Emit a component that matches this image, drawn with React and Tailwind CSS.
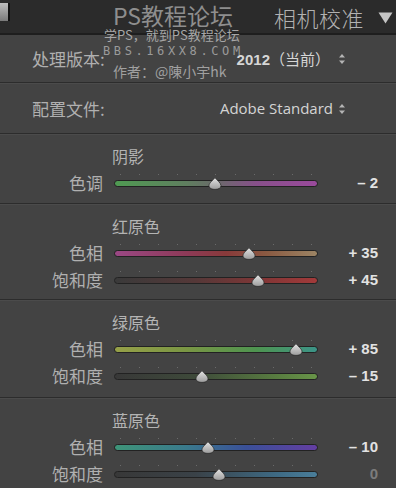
import React from "react"

const sections = [
  {
    title: "阴影",
    height: "h-[68px]",
    rows: [
      { label: "色调", value: "– 2", pos: 215, track: "bg-[linear-gradient(90deg,#4f9a52,#5f7f5f_35%,#6a6a6a_50%,#87508a_70%,#9a4a9c)]" },
    ],
  },
  {
    title: "红原色",
    height: "h-[94px]",
    rows: [
      { label: "色相", value: "+ 35", pos: 249, track: "bg-[linear-gradient(90deg,#9a4884,#8e3a58_35%,#883a3a_55%,#8a5a42_75%,#9c8464)]" },
      { label: "饱和度", value: "+ 45", pos: 258, track: "bg-[linear-gradient(90deg,#3a3a3a,#553838_40%,#843636_75%,#a23a3a)]" },
    ],
  },
  {
    title: "绿原色",
    height: "h-[96px]",
    rows: [
      { label: "色相", value: "+ 85", pos: 296, track: "bg-[linear-gradient(90deg,#96a048,#7a9644_35%,#4e9450_70%,#3c9488)]" },
      { label: "饱和度", value: "– 15", pos: 202, track: "bg-[linear-gradient(90deg,#383838,#3e4a3a_40%,#587c40_80%,#689448)]" },
    ],
  },
  {
    title: "蓝原色",
    height: "h-[89px]",
    rows: [
      { label: "色相", value: "– 10", pos: 208, track: "bg-[linear-gradient(90deg,#3e9478,#3a7a8c_35%,#3a5098_65%,#643ea2)]" },
      { label: "饱和度", value: "0", pos: 219, dim: true, track: "bg-[linear-gradient(90deg,#383838,#3a4248_40%,#3e6a84_80%,#4a7e9a)]" },
    ],
  },
]

function UpDown() {
  return (
    <svg width="8" height="12" viewBox="0 0 8 12" className="shrink-0">
      <path d="M4 1 L7 4.5 L1 4.5 Z" fill="#b4b4b4" />
      <path d="M4 11 L7 7.5 L1 7.5 Z" fill="#b4b4b4" />
    </svg>
  )
}

function Thumb() {
  return (
    <svg width="14" height="13" viewBox="0 0 14 13">
      <defs>
        <linearGradient id="tg" x1="0" y1="0" x2="0" y2="1">
          <stop offset="0" stopColor="#e4e4e4" />
          <stop offset="1" stopColor="#9c9c9c" />
        </linearGradient>
      </defs>
      <path
        d="M7 0.6 C8.2 2.6 13 5.8 13 8.6 C13 11.2 10.4 12.4 7 12.4 C3.6 12.4 1 11.2 1 8.6 C1 5.8 5.8 2.6 7 0.6 Z"
        fill="url(#tg)"
        stroke="#2a2a2a"
        strokeWidth="0.8"
      />
    </svg>
  )
}

function Slider({ row }) {
  const left = row.pos - 114
  return (
    <div className="relative w-[204px] h-[14px] ml-[11px]">
      {/* tick dots */}
      <div className="absolute left-[6px] right-[6px] top-[-2px] flex justify-between">
        {Array.from({ length: 11 }).map((_, i) => (
          <span key={i} className="w-px h-px bg-[#6a6a6a]" />
        ))}
      </div>
      <div className={`absolute left-0 right-0 top-[4px] h-[7px] rounded-full border border-[#222] ${row.track}`} />
      <div className="absolute top-[1px]" style={{ left: left - 7 }}>
        <Thumb />
      </div>
    </div>
  )
}

function Separator() {
  return <div className="h-[2px] border-t border-[#2c2c2c] bg-[#4b4b4b]" />
}

export default function App() {
  return (
    <div className="relative w-[396px] h-[488px] overflow-hidden bg-[#434343] font-['Liberation_Sans','Noto_Sans_CJK_SC',sans-serif]">
      {/* Header */}
      <div className="h-[33px] bg-[#2b2b2b] flex items-center pr-[3px]">
        <div className="self-start mt-[3px] w-[10px] h-[18px] border-r-2 border-[#111] bg-[linear-gradient(180deg,#bdbdbd,#7a7a7a)]" />
        <span className="ml-auto text-[22px] leading-none text-[#b2b2b2] font-['Noto_Sans_CJK_SC',sans-serif] font-light tracking-[0.5px]">相机校准</span>
        <svg width="15" height="12" viewBox="0 0 15 12" className="ml-[14px] mt-[2px]">
          <path d="M0.5 0.5 H14.5 L7.5 11.5 Z" fill="#c4c4c4" />
        </svg>
      </div>
      <div className="h-[2px] bg-[#1e1e1e]" />

      {/* 处理版本 */}
      <div className="h-[47px] flex items-center pl-[32px] pr-[50px]">
        <span className="text-[17px] leading-none text-[#b0b0b0] font-['Noto_Sans_CJK_SC',sans-serif]">处理版本:</span>
        <div className="ml-auto flex items-center gap-[8px]">
          <span className="text-[15px] leading-none text-[#d6d6d6]">
            <span className="font-bold font-['Liberation_Sans',sans-serif]">2012</span>
            <span className="font-['Noto_Sans_CJK_SC',sans-serif]">（当前）</span>
          </span>
          <UpDown />
        </div>
      </div>
      <Separator />

      {/* 配置文件 */}
      <div className="h-[49px] flex items-center pl-[32px] pr-[50px]">
        <span className="text-[17px] leading-none text-[#b0b0b0] font-['Noto_Sans_CJK_SC',sans-serif]">配置文件:</span>
        <div className="ml-auto flex items-center gap-[5px]">
          <span className="text-[15px] leading-none text-[#d4d4d4] font-['Open_Sans',sans-serif]">Adobe Standard</span>
          <UpDown />
        </div>
      </div>

      {sections.map((s) => (
        <div key={s.title}>
          <Separator />
          <div className={`${s.height} pt-[11px]`}>
            <div className="h-[20px] pl-[112px] flex items-center text-[16px] leading-none text-[#b4b4b4] font-['Noto_Sans_CJK_SC',sans-serif]">
              {s.title}
            </div>
            <div className="mt-[3px]">
              {s.rows.map((r) => (
                <div key={r.label} className="h-[27px] flex items-center">
                  <span className="w-[103px] text-right text-[17px] leading-none text-[#b0b0b0] font-['Noto_Sans_CJK_SC',sans-serif]">
                    {r.label}
                  </span>
                  <Slider row={r} />
                  <span className={`w-[60px] text-right text-[15px] leading-none font-bold ${r.dim ? "text-[#7c7c7c]" : "text-[#e2e2e2]"}`}>
                    {r.value}
                  </span>
                </div>
              ))}
            </div>
          </div>
        </div>
      ))}

      {/* watermark overlay */}
      <div className="absolute left-0 top-0 w-full pointer-events-none font-['Noto_Sans_CJK_SC',sans-serif]">
        <div className="absolute left-[113px] top-[2px] text-[23px] leading-[26px] text-[#8e8e8e] whitespace-nowrap">PS教程论坛</div>
        <div className="absolute left-[104px] top-[27px] text-[13px] leading-[16px] text-[#a6a6a6] whitespace-nowrap">学PS，就到PS教程论坛</div>
        <div className="absolute left-[103px] top-[44px] text-[12px] leading-[14px] tracking-[3.6px] text-[#9a9a9a] whitespace-nowrap font-['DejaVu_Sans_Mono',monospace]">BBS.16XX8.COM</div>
        <div className="absolute left-[113px] top-[62px] text-[14px] leading-[18px] text-[#a0a0a0] whitespace-nowrap">作者：@陳小宇hk</div>
      </div>
    </div>
  )
}
